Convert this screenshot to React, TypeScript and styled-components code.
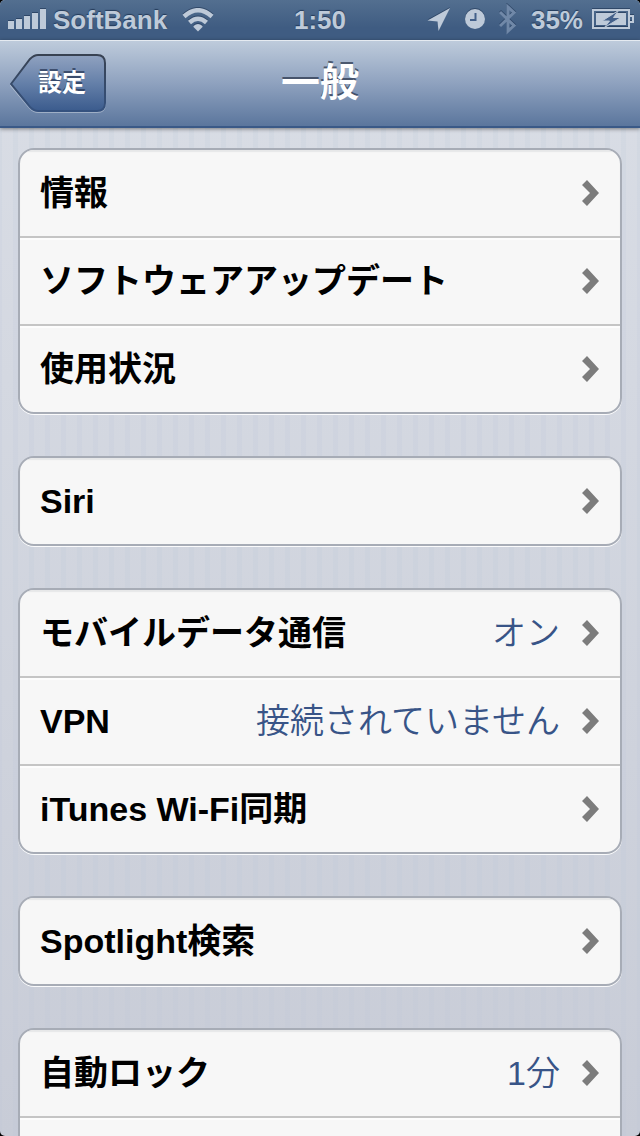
import React from "react";
import styled, { createGlobalStyle } from "styled-components";

const ink = "#becad9";

const GlobalStyle = createGlobalStyle`
  body {
    margin: 0;
    background: #000;
    font-family: "Liberation Sans", "Noto Sans CJK JP", sans-serif;
  }
  *, *::before, *::after { box-sizing: border-box; }
`;

const Screen = styled.div`
  display: flex;
  flex-direction: column;
  height: 100vh;
  overflow: hidden;
  border-radius: 5px;
  background:
    linear-gradient(90deg, rgba(185, 196, 216, 0.16) 5px, transparent 5px) 13px 0 / 16px 100%,
    linear-gradient(#dadee6, #c8ccd7);
`;

const StatusBar = styled.header`
  flex: none;
  display: grid;
  grid-template-columns: 1fr auto 1fr;
  align-items: center;
  height: 40px;
  padding: 0 6px;
  color: ${ink};
  background: linear-gradient(#536f90, #3f5c82 70%, #3f5c82);
  font-size: 26px;
  font-weight: 700;
  line-height: 40px;
  text-shadow: 0 -1px 1px rgba(20, 40, 70, 0.7);

  svg {
    display: block;
    flex: none;
    filter: drop-shadow(0 -1px 0 rgba(20, 40, 70, 0.5));
  }
`;

const StatusSide = styled.div<{ $end?: boolean }>`
  display: flex;
  align-items: center;
  justify-content: ${(p) => (p.$end ? "flex-end" : "flex-start")};
  padding-left: 2px;
`;

const Carrier = styled.span`
  margin: 0 15px 0 6px;
`;

const Percent = styled.span`
  margin: 0 9px 0 14px;
`;

const IconGap = styled.span`
  display: flex;
  margin-right: 14px;
`;

const NavBar = styled.nav`
  flex: none;
  position: relative;
  z-index: 1;
  display: grid;
  grid-template-columns: 1fr auto 1fr;
  align-items: center;
  height: 88px;
  padding: 0 10px;
  border-bottom: 2px solid #3a5987;
  background: linear-gradient(#bfccdc, #8fa2bf 50%, #5b769d);
  box-shadow: inset 0 1px 0 rgba(255, 255, 255, 0.6), 0 1px 4px rgba(0, 0, 0, 0.45);
`;

const BackButton = styled.button`
  display: grid;
  width: 96px;
  height: 60px;
  padding: 0;
  border: 0;
  background: none;
  color: #fff;
  font: inherit;
  font-size: 24px;
  font-weight: 700;
  line-height: 60px;
  text-shadow: 0 -2px 0 rgba(35, 50, 80, 0.7);

  > * { grid-area: 1 / 1; }
`;

const BackLabel = styled.span`
  padding-left: 8px;
`;

const Title = styled.h1`
  margin: 0;
  color: #fff;
  font-size: 39px;
  font-weight: 700;
  line-height: 82px;
  text-shadow: 0 -2px 0 rgba(50, 62, 84, 0.8);
`;

const Content = styled.main`
  flex: 1;
  display: flex;
  flex-direction: column;
  gap: 42px;
  min-height: 0;
  padding: 20px 18px;
  overflow-y: auto;
  scrollbar-width: none;
`;

const Group = styled.section`
  flex: none;
  border: 2px solid #a7acb6;
  border-radius: 16px;
  overflow: hidden;
  background: #f7f7f7;
  box-shadow: 0 1px 0 rgba(255, 255, 255, 0.9);
`;

const Row = styled.button`
  display: flex;
  align-items: center;
  width: 100%;
  height: 86px;
  padding: 0 20px;
  border: 0;
  background: none;
  box-shadow: inset 0 2px 0 #fdfdfd;
  color: #000;
  font: inherit;
  font-size: 34px;
  line-height: 50px;
  text-align: left;

  &:first-child { box-shadow: inset 0 2px 1px #e6e7e8; }

  & + & {
    height: 88px;
    border-top: 2px solid #c5c5c5;
  }
`;

const RowLabel = styled.span`
  flex: 1;
  font-weight: 700;
`;

const RowValue = styled.span`
  color: #385487;
  font-weight: 350;
`;

const Chevron = styled.svg`
  flex: none;
  width: 18px;
  height: 26px;
  margin-left: 22px;
  fill: #7c7c7c;
`;

type Item = { label: string; value?: string };

const groups: Item[][] = [
  [{ label: "情報" }, { label: "ソフトウェアアップデート" }, { label: "使用状況" }],
  [{ label: "Siri" }],
  [
    { label: "モバイルデータ通信", value: "オン" },
    { label: "VPN", value: "接続されていません" },
    { label: "iTunes Wi-Fi同期" },
  ],
  [{ label: "Spotlight検索" }],
  [{ label: "自動ロック", value: "1分" }, { label: "" }],
];

const Signal = () => (
  <svg width="39" height="22" viewBox="0 0 39 22" fill={ink} aria-hidden="true">
    <path d="M0 12h6v8H0zM8 10h6v10H8zM16 7h6v13h-6zM24 4h6v16h-6zM32 0h6v20h-6z" />
  </svg>
);

const Wifi = () => (
  <svg width="32" height="24" viewBox="0 0 32 24" fill="none" stroke={ink} aria-hidden="true">
    <path d="M2 8.500Q16 -4 30 8.500" strokeWidth="4.500" />
    <path d="M7.500 14.500Q16 7 24.500 14.500" strokeWidth="4.500" />
    <path d="M16 23.500L11.500 19V18Q16 14 20.500 18V19Z" fill={ink} stroke="none" />
  </svg>
);

const Location = () => (
  <svg width="24" height="24" viewBox="0 0 24 24" fill={ink} aria-hidden="true">
    <path d="M23 0L0.500 12.500L10.500 13.500L11.500 23Z" />
  </svg>
);

const Clock = () => (
  <svg width="20" height="22" viewBox="0 0 20 22" aria-hidden="true">
    <circle cx="10" cy="10" r="10" fill={ink} />
    <path d="M10.500 4V11H5" fill="none" stroke="#43608a" strokeWidth="2" />
  </svg>
);

const Bluetooth = () => (
  <svg width="18" height="32" viewBox="0 0 18 32" fill="none" stroke="#7088a8" strokeWidth="3" aria-hidden="true">
    <path d="M1 8L15 21.500L9 27V3L15 8.500L1 22" />
  </svg>
);

const Battery = () => (
  <svg width="42" height="22" viewBox="0 0 42 22" aria-hidden="true">
    <rect x="1" y="1" width="36" height="18" fill="none" stroke={ink} strokeWidth="2" />
    <path d="M38 6h4v8h-4v-2h2V8h-2z" fill={ink} />
    <rect x="4" y="4" width="30" height="12" fill={ink} />
    <path
      d="M26.500 1.500L10 12H17.500L12.500 18.500L29 8.500H21.500Z"
      fill="#43608a"
      stroke={ink}
      strokeWidth="1"
    />
  </svg>
);

const BackShape = () => (
  <svg width="96" height="60" viewBox="0 0 96 60" aria-hidden="true">
    <defs>
      <linearGradient id="backFill" x1="0" y1="0" x2="0" y2="1">
        <stop offset="0" stopColor="#90a2c0" />
        <stop offset="0.500" stopColor="#6580a9" />
        <stop offset="1" stopColor="#3b5b8d" />
      </linearGradient>
      <linearGradient id="backEdge" x1="0" y1="0" x2="0" y2="1">
        <stop offset="0" stopColor="#384252" />
        <stop offset="1" stopColor="#35527f" />
      </linearGradient>
    </defs>
    <path
      d="M1 32.500L20 8Q24 4 28 4H87Q95 4 95 12V51Q95 59 87 59H28Q24 59 20 55Z"
      fill="none"
      stroke="rgba(255,255,255,.35)"
      strokeWidth="2"
    />
    <path
      d="M1 31L20 6Q24 2 28 2H87Q95 2 95 10V50Q95 58 87 58H28Q24 58 20 54Z"
      fill="url(#backFill)"
      stroke="url(#backEdge)"
      strokeWidth="2"
    />
  </svg>
);

export default function App() {
  return (
    <Screen>
      <GlobalStyle />
      <StatusBar>
        <StatusSide>
          <Signal />
          <Carrier>SoftBank</Carrier>
          <Wifi />
        </StatusSide>
        <span>1:50</span>
        <StatusSide $end>
          <IconGap><Location /></IconGap>
          <IconGap><Clock /></IconGap>
          <Bluetooth />
          <Percent>35%</Percent>
          <Battery />
        </StatusSide>
      </StatusBar>
      <NavBar>
        <BackButton>
          <BackShape />
          <BackLabel>設定</BackLabel>
        </BackButton>
        <Title>一般</Title>
      </NavBar>
      <Content>
        {groups.map((items, i) => (
          <Group key={i}>
            {items.map((item) => (
              <Row key={item.label}>
                <RowLabel>{item.label}</RowLabel>
                {item.value && <RowValue>{item.value}</RowValue>}
                <Chevron viewBox="0 0 18 26" aria-hidden="true">
                  <path d="M0 5L5 0L17 13L5 26L0 21L8 13Z" />
                </Chevron>
              </Row>
            ))}
          </Group>
        ))}
      </Content>
    </Screen>
  );
}
